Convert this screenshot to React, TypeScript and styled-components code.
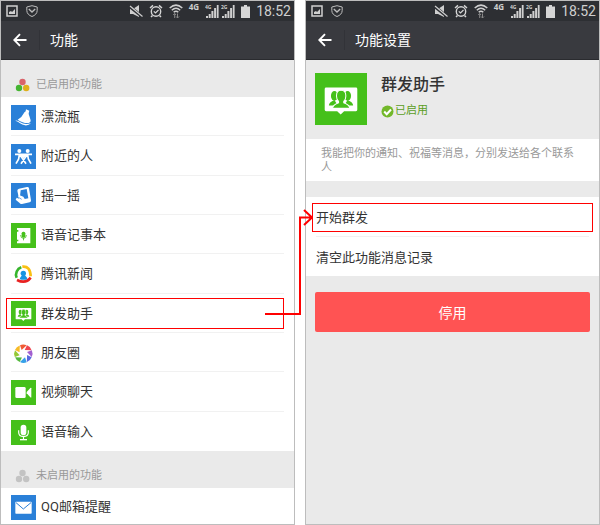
import React from "react";
import styled, { createGlobalStyle } from "styled-components";

const GlobalStyle = createGlobalStyle`
  * { box-sizing: border-box; }
  body {
    margin: 0;
    background: #fff;
    color: #333;
    font-family: Roboto, "Noto Sans CJK SC", sans-serif;
    font-size: 13px;
  }
  button { font: inherit; color: inherit; border: 0; margin: 0; cursor: pointer; }
  svg { display: block; flex: none; }
`;

const Page = styled.main`
  position: relative;
  display: grid;
  grid-template-columns: 1fr 1fr;
  gap: 10px;
  min-height: 100vh;
`;

const Screen = styled.section<{ $tone: "light" | "grey" }>`
  display: flex;
  flex-direction: column;
  min-width: 0;
  border: 1px solid #bdbdbd;
  background: ${(p) => (p.$tone === "grey" ? "#eaeaea" : "#fff")};
`;

const StatusBar = styled.div`
  display: flex;
  align-items: center;
  justify-content: space-between;
  height: 20px;
  padding: 0 3px 0 5px;
  background: #2d2f33;
  color: #cfcfcf;
`;

const StatusGroup = styled.div<{ $gap: number }>`
  display: flex;
  align-items: center;
  gap: ${(p) => p.$gap}px;
`;

const Network = styled.span`
  align-self: flex-start;
  padding-top: 1px;
  font: bold 8px/10px "Noto Sans", sans-serif;
`;

const Clock = styled.time`
  font-size: 14px;
  line-height: 20px;
`;

const TitleBar = styled.header`
  display: flex;
  align-items: center;
  height: 39px;
  background: #393a3f;
  border-bottom: 1px solid #2a2b2f;
  color: #fff;
`;

const BackButton = styled.button`
  display: flex;
  align-items: center;
  width: 39px;
  height: 20px;
  padding: 0 0 0 12px;
  background: none;
  border-right: 1px solid #323338;
`;

const Title = styled.h1`
  margin: 0;
  padding-left: 10px;
  font-size: 14px;
  line-height: 20px;
  font-weight: 400;
`;

const SectionLabel = styled.h2`
  display: flex;
  align-items: center;
  gap: 6px;
  height: 37px;
  margin: 0;
  padding: 13px 14px 0;
  background: #eaeaea;
  color: #999;
  font-size: 11px;
  line-height: 16px;
  font-weight: 400;
`;

const FeatureList = styled.ul<{ $grow?: boolean }>`
  display: grid;
  grid-auto-rows: minmax(36px, 1fr);
  flex: ${(p) => (p.$grow ? 1 : "none")};
  margin: 0;
  padding: 0 10px;
  list-style: none;
`;

const FeatureItem = styled.li`
  position: relative;
  display: flex;
  border-bottom: 1px solid #f1f1f1;
  &:last-child { border-bottom: 0; }
`;

const FeatureButton = styled.button`
  display: flex;
  flex: 1;
  align-items: center;
  gap: 5px;
  padding: 2px 0 0;
  background: none;
  text-align: left;
  line-height: 20px;
`;

const Highlight = styled.span<{ $inset: string }>`
  position: absolute;
  inset: ${(p) => p.$inset};
  border: 1px solid #f00;
  pointer-events: none;
`;

const Profile = styled.div`
  display: flex;
  gap: 14px;
  height: 79px;
  padding: 13px 9px;
`;

const ProfileText = styled.div`
  display: flex;
  flex-direction: column;
  gap: 4px;
`;

const ProfileName = styled.h2`
  margin: 0;
  font-size: 16px;
  line-height: 24px;
  font-weight: 500;
`;

const Enabled = styled.p`
  display: flex;
  align-items: center;
  gap: 1px;
  margin: 0;
  color: #5a9e1c;
  font-size: 11px;
  line-height: 20px;
`;

const Description = styled.p`
  margin: 0 0 16px;
  padding: 8px 15px 6px;
  background: #fff;
  color: #999;
  font-size: 11px;
  line-height: 14px;
`;

const ActionList = styled.ul`
  margin: 0;
  padding: 0 10px;
  background: #fff;
  list-style: none;
`;

const ActionItem = styled.li`
  position: relative;
  & + & { border-top: 1px solid #f1f1f1; }
`;

const ActionButton = styled.button`
  display: block;
  width: 100%;
  height: 39px;
  padding: 0 0 1px;
  background: none;
  text-align: left;
`;

const DisableButton = styled.button`
  height: 40px;
  margin: 16px 9px;
  border-radius: 2px;
  background: #ff5353;
  color: #fff;
  font-size: 14px;
`;

const Connector = styled.svg`
  position: absolute;
  top: 207px;
  left: calc(50% - 35px);
  pointer-events: none;
`;

const PictureIcon = () => (
  <svg width="12" height="12" viewBox="0 0 12 12">
    <rect x="1" y="1" width="10" height="10" fill="none" stroke="#d0d0d0" strokeWidth="1.5" />
    <path d="M3 9V7l2-1 1 1 3-3v5z" fill="#d0d0d0" />
  </svg>
);

const ShieldIcon = () => (
  <svg width="12" height="12" viewBox="0 0 12 12" fill="none" stroke="#bdbdbd">
    <path d="M6 .7 11.2 2v3.4C11.2 8.500 9 10.400 6 11.500 3 10.400.8 8.500.8 5.400V2z" />
    <path d="M2.800 4 6 7l3.200-3" strokeWidth="1.400" />
  </svg>
);

const MuteIcon = () => (
  <svg width="14" height="13" viewBox="0 0 14 13">
    <path d="M1 4h3l6-4v12L4 9H1z" fill="#cfcfcf" />
    <path d="m0 1 12.500 10" stroke="#2d2f33" strokeWidth="3" />
    <path d="m1 1 12.500 10.500" stroke="#cfcfcf" strokeWidth="1.200" />
  </svg>
);

const AlarmIcon = () => (
  <svg width="14" height="14" viewBox="0 0 14 14" fill="none" stroke="#d5d5d5">
    <circle cx="7" cy="7.500" r="4.700" strokeWidth="1.400" />
    <path d="M1 4 4 1.400M13 4l-3-2.600M3.500 11.500 2 13M10.500 11.500 12 13" strokeWidth="1.500" />
    <path d="m4.800 7.300 1.700 1.700 3-3" strokeWidth="1.200" />
  </svg>
);

const WifiIcon = () => (
  <svg width="14" height="14" viewBox="0 0 14 14" fill="none" stroke="#cfcfcf" strokeWidth="1.500">
    <path d="M.7 4Q7-1.700 13.300 4M2.800 6.200q4.200-4 8.400 0M4.700 8.300q2.300-2.200 4.600 0" />
    <path d="M5.700 14V9.500M4.200 11l1.500-1.500L7 11M8.500 9.500V14M7.200 12.500 8.500 14 10 12.500" stroke="#888" strokeWidth="1" />
  </svg>
);

const SignalIcon = ({ label }: { label: string }) => (
  <svg width="14" height="13" viewBox="0 0 14 13" fill="#cfcfcf">
    <text x="0" y="4" fontSize="5" fontWeight="700" fontFamily="Noto Sans">{label}</text>
    <path d="M1 11h2v2H1zM3.700 9h2v4h-2zM6.400 6h2v7h-2zM9.100 3h2v10h-2zM11.800 0h1.800v13h-1.800z" />
  </svg>
);

const BatteryIcon = () => (
  <svg width="9" height="13" viewBox="0 0 9 13">
    <path d="M3 0h3v1.500h3V13H0V1.500h3z" fill="#d5d5d5" />
  </svg>
);

const BackIcon = () => (
  <svg width="14" height="14" viewBox="0 0 14 14" fill="none" stroke="#fff" strokeWidth="1.900">
    <path d="M13.500 7H1.500M7 1.200 1.300 7 7 12.800" />
  </svg>
);

const Dots = ({ colors }: { colors: string[] }) => (
  <svg width="15" height="14" viewBox="0 0 15 14">
    <circle cx="7.500" cy="4" r="3.200" fill={colors[0]} />
    <circle cx="4" cy="10" r="3.200" fill={colors[1]} />
    <circle cx="11.200" cy="10" r="3.200" fill={colors[2]} />
  </svg>
);

const BLUE = "#2a80d8";
const GREEN = "#45c01a";

type TileProps = { color?: string; size?: number; children: React.ReactNode };

const Tile = ({ color = "none", size = 25, children }: TileProps) => (
  <svg width={size} height={size} viewBox="0 0 75 75" fill="#fff" aria-hidden="true">
    <rect width="75" height="75" fill={color} />
    {children}
  </svg>
);

const BottleIcon = () => (
  <Tile color={BLUE}>
    <path d="m45 13 10 4-2 8q0 4 2 8l4 13q1 7-6 8-15 2-33-10 13-7 17-17 2-5 7-8z" />
    <path d="M13 47q8-1 15 5 12 8 32 3-7 7-18 6-9-1-15-6-6-6-14-8z" />
  </Tile>
);

const NearbyIcon = () => (
  <Tile color={BLUE}>
    <circle cx="25" cy="21" r="6" />
    <circle cx="50" cy="21" r="6" />
    <path d="M12 31h51M25 31l10 13 10 15M50 31 40 44 30 59M25 32l-2 13-8 14M50 32l2 13 8 14" fill="none" stroke="#fff" strokeWidth="5" />
    <path d="m23 31 14 12 15-12z" />
  </Tile>
);

const ShakeIcon = () => (
  <Tile color={BLUE}>
    <path d="m24 17 24-5q5-1 6 4l6 36q1 5-4 6l-23 5q-5 1-8-4l-11-9 3-6 7 3-5-24q0-5 5-6z" />
    <path d="m29 22 18-4 5 28-14 3-5-6-6-3z" fill={BLUE} />
    <path d="m23 39 12 5 7 11" fill="none" stroke="#fff" strokeWidth="6" />
    <path d="m24 44 8 5" stroke={BLUE} strokeWidth="2" />
  </Tile>
);

const VoiceMemoIcon = () => (
  <Tile color={GREEN}>
    <path d="M18 15h40v46H18v-6h4v-5h-4V26h4v-5h-4z" />
    <rect x="32" y="26" width="11" height="18" rx="5" fill={GREEN} />
    <path d="M29 36q0 10 8.500 10T46 36M37.500 45v7" fill="none" stroke={GREEN} strokeWidth="2.500" />
  </Tile>
);

const NewsIcon = () => (
  <Tile>
    <g fill="none" strokeWidth="8">
      <path d="M17 47A23 23 0 0 1 31 16" stroke="#36b52c" />
      <path d="M34 14q24-3 25 29" stroke="#fac013" />
      <path d="M59 47Q44 67 18 54" stroke="#e82222" />
    </g>
    <circle cx="37" cy="34" r="8" fill="#1694e3" />
    <path d="m37 34-10 14q-2 5 5 5h13q6-2 2-7z" fill="#1694e3" />
  </Tile>
);

const GroupIcon = ({ size }: { size?: number }) => (
  <Tile color={GREEN} size={size}>
    <path d="M16 21h43q2 0 2 2v30q0 2-2 2H42l-5 5-5-5H16q-2 0-2-2V23q0-2 2-2z" />
    <g fill={GREEN}>
      <ellipse cx="28" cy="33" rx="5" ry="7" />
      <path d="M20 47q0-5 8-8l5 8z" />
      <ellipse cx="47" cy="33" rx="5" ry="7" />
      <path d="M55 47q0-5-8-8l-5 8z" />
    </g>
    <path d="M37.500 25q7 0 7 8 0 5-3 8v2q8 3 9 8H25q1-5 9-8v-2q-3-3-3-8 0-8 6.500-8z" fill={GREEN} stroke="#fff" strokeWidth="1.500" />
  </Tile>
);

const MOMENT_COLORS = ["#f05b35", "#ef4550", "#a15fd0", "#5868df", "#36a0e8", "#54b83d", "#95c934", "#f7bb27"];

const MomentsIcon = () => (
  <Tile>
    {MOMENT_COLORS.map((color, i) => (
      <path key={color} d="M27 12.500Q37 8 47 13L32 27z" fill={color} transform={`rotate(${i * 45} 37 38)`} />
    ))}
  </Tile>
);

const VideoIcon = () => (
  <Tile color={GREEN}>
    <rect x="13" y="21" width="31" height="33" rx="4" />
    <path d="m47 36 11-12q3-2 3 1v26q0 3-3 1L47 40z" />
  </Tile>
);

const MicIcon = () => (
  <Tile color={GREEN}>
    <rect x="29" y="14" width="17" height="32" rx="8.500" />
    <path d="M23 31v6q0 13 14.500 13T52 37v-6M37.500 50v9" fill="none" stroke="#fff" strokeWidth="3.500" />
    <path d="M27 57h21v4H27z" />
  </Tile>
);

const MailIcon = () => (
  <Tile color={BLUE}>
    <rect x="13" y="20" width="49" height="36" rx="2" />
    <path d="m14 22 23 20 24-20" fill="none" stroke={BLUE} strokeWidth="3" />
  </Tile>
);

const CheckIcon = () => (
  <svg width="13" height="13" viewBox="0 0 13 13">
    <circle cx="6.500" cy="6.500" r="6" fill="#72b82a" />
    <path d="m3.200 6.500 2.500 2.700L10 4.500" fill="none" stroke="#fff" strokeWidth="2" />
  </svg>
);

const enabledFeatures = [
  { name: "漂流瓶", icon: <BottleIcon /> },
  { name: "附近的人", icon: <NearbyIcon /> },
  { name: "摇一摇", icon: <ShakeIcon /> },
  { name: "语音记事本", icon: <VoiceMemoIcon /> },
  { name: "腾讯新闻", icon: <NewsIcon /> },
  { name: "群发助手", icon: <GroupIcon />, marked: true },
  { name: "朋友圈", icon: <MomentsIcon /> },
  { name: "视频聊天", icon: <VideoIcon /> },
  { name: "语音输入", icon: <MicIcon /> },
];

const ScreenTop = ({ title }: { title: string }) => (
  <>
    <StatusBar>
      <StatusGroup $gap={8}>
        <PictureIcon />
        <ShieldIcon />
      </StatusGroup>
      <StatusGroup $gap={6}>
        <MuteIcon />
        <AlarmIcon />
        <WifiIcon />
        <Network>4G</Network>
        <StatusGroup $gap={2}>
          <SignalIcon label="4G" />
          <SignalIcon label="2G" />
        </StatusGroup>
        <BatteryIcon />
        <Clock>18:52</Clock>
      </StatusGroup>
    </StatusBar>
    <TitleBar>
      <BackButton aria-label="返回">
        <BackIcon />
      </BackButton>
      <Title>{title}</Title>
    </TitleBar>
  </>
);

export default function App() {
  return (
    <>
      <GlobalStyle />
      <Page lang="zh-CN">
        <Screen $tone="light">
          <ScreenTop title="功能" />
          <SectionLabel>
            <Dots colors={["#d9636a", "#45b532", "#dfb01c"]} />
            已启用的功能
          </SectionLabel>
          <FeatureList $grow>
            {enabledFeatures.map((feature) => (
              <FeatureItem key={feature.name}>
                <FeatureButton>
                  {feature.icon}
                  {feature.name}
                </FeatureButton>
                {feature.marked && <Highlight $inset="4px 0 3px -5px" />}
              </FeatureItem>
            ))}
          </FeatureList>
          <SectionLabel>
            <Dots colors={["#c3c3c3", "#c3c3c3", "#c3c3c3"]} />
            未启用的功能
          </SectionLabel>
          <FeatureList>
            <FeatureItem>
              <FeatureButton>
                <MailIcon />
                QQ邮箱提醒
              </FeatureButton>
            </FeatureItem>
          </FeatureList>
        </Screen>

        <Screen $tone="grey">
          <ScreenTop title="功能设置" />
          <Profile>
            <GroupIcon size={52} />
            <ProfileText>
              <ProfileName>群发助手</ProfileName>
              <Enabled>
                <CheckIcon />
                已启用
              </Enabled>
            </ProfileText>
          </Profile>
          <Description>我能把你的通知、祝福等消息，分别发送给各个联系人</Description>
          <ActionList>
            <ActionItem>
              <ActionButton>开始群发</ActionButton>
              <Highlight $inset="6px -4px 4px -4px" />
            </ActionItem>
            <ActionItem>
              <ActionButton>清空此功能消息记录</ActionButton>
            </ActionItem>
          </ActionList>
          <DisableButton>停用</DisableButton>
        </Screen>

        <Connector width="48" height="110" viewBox="0 0 48 110" fill="none" stroke="#f00" strokeWidth="2" aria-hidden="true">
          <path d="M0 107h35V10.500h11M39 3l8 7.500-8 7.500" />
        </Connector>
      </Page>
    </>
  );
}
